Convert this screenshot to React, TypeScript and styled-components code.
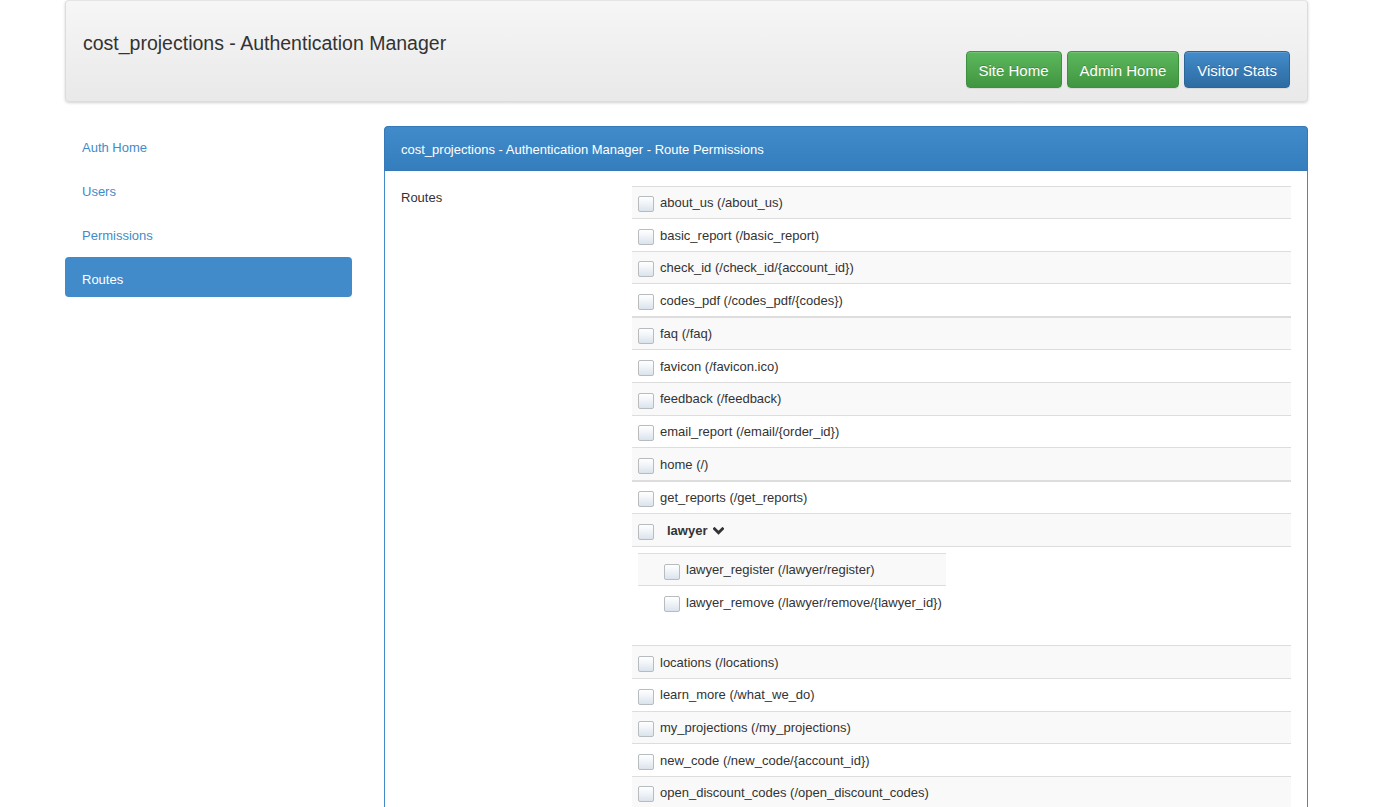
import React from "react";
import styled, { createGlobalStyle } from "styled-components";

const GlobalStyle = createGlobalStyle`
  html, body { margin: 0; padding: 0; background: #fff; }
  body {
    font-family: "Liberation Sans", Helvetica, Arial, sans-serif;
    font-size: 13px;
    line-height: 1.42857;
    color: #333;
  }
  * { box-sizing: border-box; }
`;

const Page = styled.div`
  width: 1243px;
  margin-left: 65px;
`;

const Header = styled.header`
  height: 102px;
  display: flex;
  justify-content: space-between;
  align-items: flex-start;
  padding: 0 17px 13px 17px;
  background: linear-gradient(to bottom, #f6f6f6 0%, #e9e9e9 100%);
  border: 1px solid #dcdcdc;
  border-top-color: #e4e4e4;
  border-radius: 4px;
  box-shadow: 0 1px 3px rgba(0, 0, 0, 0.18);
`;

const Title = styled.h1`
  margin: 32px 0 0 0;
  font-size: 19.5px;
  font-weight: normal;
  line-height: 1.1;
  color: #333;
`;

const ButtonGroup = styled.div`
  align-self: flex-end;
  display: flex;
  gap: 5px;
`;

const Button = styled.a<{ $variant: "success" | "primary" }>`
  display: inline-block;
  padding: 8px 12px 6px;
  font-size: 15px;
  line-height: 21px;
  color: #fff;
  text-decoration: none;
  border-radius: 4px;
  text-shadow: 0 -1px 0 rgba(0, 0, 0, 0.2);
  box-shadow: inset 0 1px 0 rgba(255, 255, 255, 0.15), 0 1px 1px rgba(0, 0, 0, 0.075);
  border: 1px solid ${(p) => (p.$variant === "success" ? "#3e8f3e" : "#2b669a")};
  background: ${(p) =>
    p.$variant === "success"
      ? "linear-gradient(to bottom, #5cb85c 0%, #419641 100%)"
      : "linear-gradient(to bottom, #428bca 0%, #2d6ca2 100%)"};
`;

const Content = styled.div`
  display: grid;
  grid-template-columns: 287px 924px;
  column-gap: 32px;
  margin-top: 23px;
`;

const Nav = styled.ul`
  list-style: none;
  margin: 0;
  padding: 0;
  display: flex;
  flex-direction: column;
  gap: 4px;
`;

const NavItem = styled.li<{ $active?: boolean }>`
  a {
    display: block;
    height: 40px;
    padding: 13px 17px 7px;
    line-height: 20px;
    font-size: 13px;
    text-decoration: none;
    border-radius: 4px;
    color: ${(p) => (p.$active ? "#fff" : "#428bca")};
    background: ${(p) => (p.$active ? "#428bca" : "transparent")};
  }
`;

const Panel = styled.section`
  margin-top: 1px;
  border: 1px solid #428bca;
  border-radius: 4px;
  background: #fff;
`;

const PanelHeading = styled.div`
  padding: 14px 16px 10px;
  margin: -1px -1px 0 -1px;
  border-radius: 4px 4px 0 0;
  background: linear-gradient(to bottom, #428bca 0%, #357ebd 100%);
  border: 1px solid #3679b8;
  color: #fff;
  font-size: 13px;
  line-height: 18.57px;
`;

const PanelBody = styled.div`
  padding: 15px 16px 20px 16px;
  display: grid;
  grid-template-columns: 231px 1fr;
`;

const FieldLabel = styled.div`
  padding-top: 3px;
  line-height: 18.57px;
`;

const Table = styled.table`
  width: 100%;
  border-collapse: collapse;
  border-spacing: 0;
`;

const Row = styled.tr<{ $striped?: boolean; $thick?: boolean }>`
  background: ${(p) => (p.$striped ? "#f9f9f9" : "#fff")};
  & > td {
    border-top: ${(p) => (p.$thick ? "2px" : "1px")} solid #dddddd;
    padding: 7.5px 6px 5.5px;
    line-height: 18.57px;
    vertical-align: top;
    white-space: nowrap;
  }
`;

const SubTable = styled.table`
  border-collapse: collapse;
  border-spacing: 0;
  margin: -1.5px 0 22px 0;
`;

const SubRow = styled.tr<{ $striped?: boolean }>`
  background: ${(p) => (p.$striped ? "#f9f9f9" : "#fff")};
  & > td {
    border-top: 1px solid #dddddd;
    padding: 7.5px 4px 5.5px 26px;
    line-height: 18.57px;
    white-space: nowrap;
  }
`;

const CheckLabel = styled.label`
  display: flex;
  align-items: center;
  gap: 6px;
  height: 18.57px;
`;

const Box = styled.input.attrs({ type: "checkbox" })`
  appearance: none;
  -webkit-appearance: none;
  width: 16px;
  height: 16px;
  margin: 2px 0 0 0;
  border: 1px solid #b9bcbf;
  border-radius: 2px;
  background: linear-gradient(to bottom, #ffffff 0%, #f0f4f8 45%, #dae3ec 100%);
  flex: none;
`;

const GroupName = styled.span`
  margin-left: 7px;
  font-weight: bold;
  display: inline-flex;
  align-items: center;
  gap: 6px;
`;

const Chevron = () => (
  <svg width="11" height="8" viewBox="0 0 11 8" aria-hidden="true">
    <polyline
      points="1.5,1.8 5.5,5.8 9.5,1.8"
      fill="none"
      stroke="#333"
      strokeWidth="2.8"
      strokeLinecap="square"
    />
  </svg>
);

type Route = { name: string; path: string; thick?: boolean };

const before: Route[] = [
  { name: "about_us", path: "/about_us" },
  { name: "basic_report", path: "/basic_report" },
  { name: "check_id", path: "/check_id/{account_id}" },
  { name: "codes_pdf", path: "/codes_pdf/{codes}" },
  { name: "faq", path: "/faq", thick: true },
  { name: "favicon", path: "/favicon.ico" },
  { name: "feedback", path: "/feedback" },
  { name: "email_report", path: "/email/{order_id}" },
  { name: "home", path: "/" },
  { name: "get_reports", path: "/get_reports", thick: true },
];

const lawyerRoutes: Route[] = [
  { name: "lawyer_register", path: "/lawyer/register" },
  { name: "lawyer_remove", path: "/lawyer/remove/{lawyer_id}" },
];

const after: Route[] = [
  { name: "locations", path: "/locations" },
  { name: "learn_more", path: "/what_we_do" },
  { name: "my_projections", path: "/my_projections" },
  { name: "new_code", path: "/new_code/{account_id}" },
  { name: "open_discount_codes", path: "/open_discount_codes" },
];

const RouteCheck = ({ r }: { r: Route }) => (
  <CheckLabel>
    <Box />
    <span>
      {r.name} ({r.path})
    </span>
  </CheckLabel>
);

export default function App() {
  const navItems = ["Auth Home", "Users", "Permissions", "Routes"];
  let idx = 0;
  return (
    <>
      <GlobalStyle />
      <Page>
        <Header>
          <Title>cost_projections - Authentication Manager</Title>
          <ButtonGroup>
            <Button $variant="success" href="#">Site Home</Button>
            <Button $variant="success" href="#">Admin Home</Button>
            <Button $variant="primary" href="#">Visitor Stats</Button>
          </ButtonGroup>
        </Header>
        <Content>
          <Nav>
            {navItems.map((n) => (
              <NavItem key={n} $active={n === "Routes"}>
                <a href="#">{n}</a>
              </NavItem>
            ))}
          </Nav>
          <Panel>
            <PanelHeading>
              cost_projections - Authentication Manager - Route Permissions
            </PanelHeading>
            <PanelBody>
              <FieldLabel>Routes</FieldLabel>
              <Table>
                <tbody>
                  {before.map((r) => {
                    const striped = idx++ % 2 === 0;
                    return (
                      <Row key={r.name} $striped={striped} $thick={r.thick}>
                        <td>
                          <RouteCheck r={r} />
                        </td>
                      </Row>
                    );
                  })}
                  <Row $striped={idx++ % 2 === 0}>
                    <td>
                      <CheckLabel>
                        <Box />
                        <GroupName>
                          lawyer <Chevron />
                        </GroupName>
                      </CheckLabel>
                    </td>
                  </Row>
                  <Row $striped={idx++ % 2 === 0}>
                    <td>
                      <SubTable>
                        <tbody>
                          {lawyerRoutes.map((r, i) => (
                            <SubRow key={r.name} $striped={i % 2 === 0}>
                              <td>
                                <RouteCheck r={r} />
                              </td>
                            </SubRow>
                          ))}
                        </tbody>
                      </SubTable>
                    </td>
                  </Row>
                  {after.map((r) => {
                    const striped = idx++ % 2 === 0;
                    return (
                      <Row key={r.name} $striped={striped} $thick={r.thick}>
                        <td>
                          <RouteCheck r={r} />
                        </td>
                      </Row>
                    );
                  })}
                </tbody>
              </Table>
            </PanelBody>
          </Panel>
        </Content>
      </Page>
    </>
  );
}
